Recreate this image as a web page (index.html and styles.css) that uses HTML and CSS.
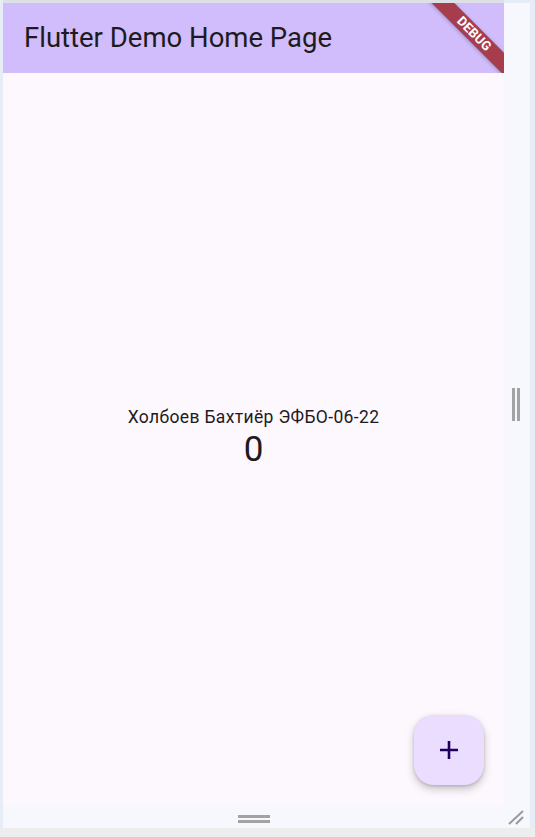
FILE: index.html
```html
<!DOCTYPE html>
<html lang="ru">
<head>
<meta charset="utf-8">
<title>Flutter Demo Home Page</title>
<link rel="stylesheet" href="styles.css">
</head>
<body>
<div class="shell">
  <div class="workspace">
    <div class="row">
      <div class="app">
        <header class="appbar">
          <h1 class="title">Flutter Demo Home Page</h1>
          <div class="banner">DEBUG</div>
        </header>
        <main class="content">
          <div class="center">
            <div class="name">Холбоев Бахтиёр ЭФБО-06-22</div>
            <div class="counter">0</div>
          </div>
          <button class="fab" aria-label="Increment">
            <svg width="20" height="20" viewBox="0 0 20 20"><path d="M10 1V19M1 10H19" stroke="#21005d" stroke-width="2.6" fill="none"/></svg>
          </button>
        </main>
      </div>
      <div class="side">
        <div class="vhandle"><span></span><span></span></div>
      </div>
    </div>
    <div class="bottom">
      <div class="hhandle-wrap"><div class="hhandle"><span></span><span></span></div></div>
      <div class="grip">
        <svg width="18" height="16" viewBox="0 0 18 16"><path d="M2 15L16 2M9 15L16 8" stroke="#9a9a9a" stroke-width="2" fill="none"/></svg>
      </div>
    </div>
  </div>
  <div class="status"></div>
</div>
</body>
</html>
```
FILE: styles.css
```css
* { box-sizing: border-box; }
html, body { margin: 0; padding: 0; }
body {
  width: 535px;
  height: 837px;
  overflow: hidden;
  background: #e7edf7;
  font-family: Roboto, "Noto Sans", sans-serif;
}
.shell {
  display: flex;
  flex-direction: column;
  height: 837px;
}
.workspace {
  flex: 1;
  display: flex;
  flex-direction: column;
  margin-left: 3px;
  margin-right: 5px;
}
.row {
  display: flex;
  height: 805px;
}
.app {
  width: 501px;
  height: 805px;
  display: flex;
  flex-direction: column;
  border-top: 3px solid #dde1e7;
  position: relative;
  overflow: hidden;
}
.appbar {
  height: 70px;
  background: #d1bcfc;
  display: flex;
  align-items: center;
  padding-left: 21px;
  position: relative;
  overflow: hidden;
}
.title {
  margin: 0;
  font-weight: 400;
  font-size: 27.5px;
  color: #1d1b20;
  letter-spacing: 0;
  padding-bottom: 2px;
}
.banner {
  position: absolute;
  left: 396px;
  top: 23px;
  width: 150px;
  height: 16px;
  transform: rotate(45deg);
  background: #a63c4c;
  color: #fff;
  font-weight: 700;
  font-size: 13px;
  line-height: 16px;
  text-align: center;
  letter-spacing: 0.2px;
  box-shadow: 0 1px 4px rgba(0,0,0,0.25);
}
.content {
  flex: 1;
  background: #fdf7fe;
  display: flex;
  align-items: center;
  justify-content: center;
  position: relative;
}
.center {
  display: flex;
  flex-direction: column;
  align-items: center;
  padding-bottom: 2px;
}
.name {
  font-size: 17.5px;
  line-height: 24px;
  color: #1d1b20;
  letter-spacing: 0.35px;
}
.counter {
  font-size: 35px;
  line-height: 42px;
  color: #1d1b20;
}
.fab {
  position: absolute;
  right: 20px;
  bottom: 20px;
  width: 70px;
  height: 70px;
  border: none;
  border-radius: 20px;
  background: #eaddff;
  box-shadow: 0 4px 8px rgba(0,0,0,0.22), 0 1px 3px rgba(0,0,0,0.15);
  display: flex;
  align-items: center;
  justify-content: center;
  padding: 0;
}
.side {
  flex: 1;
  margin-top: 3px;
  background: #f6f8fd;
  display: flex;
  align-items: center;
  padding-left: 8px;
}
.vhandle {
  display: flex;
  gap: 2px;
}
.vhandle span {
  width: 3px;
  height: 33px;
  background: #a3a3a3;
}
.bottom {
  flex: 1;
  background: #f6f8fd;
  display: flex;
}
.hhandle-wrap {
  width: 501px;
  display: flex;
  justify-content: center;
  padding-top: 10px;
}
.hhandle {
  display: flex;
  flex-direction: column;
  gap: 2px;
}
.hhandle span {
  width: 32px;
  height: 3px;
  background: #a3a3a3;
}
.grip {
  flex: 1;
  display: flex;
  align-items: flex-end;
  padding-left: 3px;
  padding-bottom: 3px;
}
.status {
  height: 9px;
  background: #ededed;
}
```
